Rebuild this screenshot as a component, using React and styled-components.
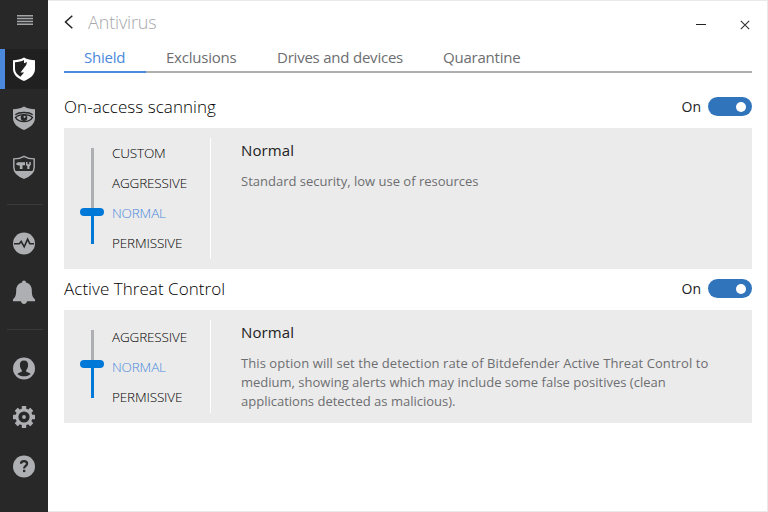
import React, { useState } from "react";
import styled, { createGlobalStyle } from "styled-components";

const MENU = [
  { id: "protection", Icon: ShieldIcon },
  { id: "privacy", Icon: EyeIcon },
  { id: "tools", Icon: ToolsIcon },
  { divider: true, id: "d1" },
  { id: "activity", Icon: ActivityIcon },
  { id: "notifications", Icon: BellIcon },
  { divider: true, id: "d2" },
  { id: "account", Icon: AccountIcon },
  { id: "settings", Icon: GearIcon },
  { id: "support", Icon: HelpIcon },
];

const TABS = [
  { name: "Shield", width: 82 },
  { name: "Exclusions", width: 111 },
  { name: "Drives and devices", width: 166 },
  { name: "Quarantine", width: 117 },
];

const SECTIONS = [
  {
    title: "On-access scanning",
    levels: ["CUSTOM", "AGGRESSIVE", "NORMAL", "PERMISSIVE"],
    level: "NORMAL",
    height: 141,
    offset: 0,
    rail: 28,
    text: [{ line: "Standard security, low use of resources" }],
  },
  {
    title: "Active Threat Control",
    levels: ["AGGRESSIVE", "NORMAL", "PERMISSIVE"],
    level: "NORMAL",
    height: 113,
    offset: 2,
    rail: 30,
    text: [
      {
        line: "This option will set the detection rate of Bitdefender Active Threat Control to",
        tracking: 0.075,
      },
      { line: "medium, showing alerts which may include some false positives (clean" },
      { line: "applications detected as malicious)." },
    ],
  },
];

function App() {
  const [tab, setTab] = useState("Shield");

  return (
    <Window>
      <GlobalStyle />
      <Sidebar>
        <MenuButton>
          <MenuIcon />
        </MenuButton>
        {MENU.map(({ id, Icon, divider }) =>
          divider ? (
            <Divider key={id} />
          ) : (
            <NavItem key={id} $active={id === "protection"}>
              <Icon />
            </NavItem>
          )
        )}
      </Sidebar>
      <Main>
        <Header>
          <BackIcon />
          <Title>Antivirus</Title>
          <WindowButtons>
            <MinimizeIcon />
            <CloseIcon />
          </WindowButtons>
        </Header>
        <Tabs>
          {TABS.map(({ name, width }) => (
            <Tab key={name} $width={width} $active={name === tab} onClick={() => setTab(name)}>
              {name}
            </Tab>
          ))}
        </Tabs>
        {SECTIONS.map((section) => (
          <Section key={section.title} {...section} />
        ))}
      </Main>
    </Window>
  );
}

function Section({ title, levels, level, height, offset, rail, text }) {
  const [on, setOn] = useState(true);

  return (
    <section>
      <SectionHead>
        <SectionTitle>{title}</SectionTitle>
        <SwitchLabel>{on ? "On" : "Off"}</SwitchLabel>
        <Switch $on={on} onClick={() => setOn(!on)}>
          <Knob />
        </Switch>
      </SectionHead>
      <Card $height={height}>
        <Slider>
          <Rail $height={levels.indexOf(level) * 30} />
          <Handle />
          <Rail $filled $height={rail} />
        </Slider>
        <Levels $offset={offset}>
          {levels.map((name) => (
            <Level key={name} $active={name === level}>
              {name}
            </Level>
          ))}
        </Levels>
        <Description>
          <h3>Normal</h3>
          {text.map(({ line, tracking }) => (
            <Line key={line} $tracking={tracking}>
              {line}
            </Line>
          ))}
        </Description>
      </Card>
    </section>
  );
}

function MenuIcon() {
  return (
    <svg width="16" height="10" viewBox="0 0 16 10" fill="#a4a5a8">
      <rect width="16" height="1.500" />
      <rect y="2.800" width="16" height="1.500" />
      <rect y="5.700" width="16" height="1.500" />
      <rect y="8.500" width="16" height="1.500" />
    </svg>
  );
}

function ShieldIcon() {
  return (
    <svg width="24" height="24" viewBox="0 0 24 24">
      <path d="M12 .5C9 2.500 5 3.200 1 3.200V12c0 5.500 4.500 9.500 11 12 6.500-2.500 11-6.500 11-12V3.200C19 3.200 15 2.500 12 .5z" fill="#fff" />
      <path d="M3 5.200c3.500 0 6.800-.8 9-2.200v3.300l3-1.200-.8 3-5.700 7.500h3.600l-3.700 4.100C5 17.500 3 15.200 3 12z" fill="#202020" />
    </svg>
  );
}

function EyeIcon() {
  return (
    <svg width="24" height="24" viewBox="0 0 24 24">
      <path d="M12 .5C9 2.500 5 3.200 1 3.200V12c0 5.500 4.500 9.500 11 12 6.500-2.500 11-6.500 11-12V3.200C19 3.200 15 2.500 12 .5z" fill="#aeafb3" />
      <path d="M3.300 8.800C7 5.700 17 5.700 20.700 8.800" fill="none" stroke="#282828" strokeWidth="1.300" />
      <path d="M3.500 11.500C7 7.600 17 7.600 20.500 11.500c-3 5.400-14 5.400-17 0z" fill="none" stroke="#282828" strokeWidth="1.400" />
      <circle cx="12" cy="11.800" r="3.300" fill="#282828" />
      <circle cx="12.600" cy="10.800" r="1.100" fill="#aeafb3" />
    </svg>
  );
}

function ToolsIcon() {
  return (
    <svg width="24" height="24" viewBox="0 0 24 24">
      <path d="M12 1.300C9 3.100 5.500 3.900 1.800 3.900V12c0 5 4.200 8.800 10.200 11.200C18 20.800 22.200 17 22.200 12V3.900C18.500 3.900 15 3.100 12 1.300z" fill="none" stroke="#aeafb3" strokeWidth="1.400" />
      <path d="M2.500 16h19c-1.500 3.200-4.500 5.700-9.500 7.500C7 21.700 4 19.200 2.500 16z" fill="#aeafb3" />
      <path d="M4.300 8.200L6 7.200h7v3h-2.500V14H7.800v-3.500H6.500L4.300 9.700zM14 7h1.500v2.200h1.800V7h1.500v3l-1.300 1.300V14h-2.200v-2.700L14 10z" fill="#aeafb3" />
    </svg>
  );
}

function ActivityIcon() {
  return (
    <svg width="24" height="24" viewBox="0 0 24 24">
      <circle cx="12" cy="12.500" r="11" fill="#aeafb3" />
      <path d="M2 12.700h5.300l1.900-2.200 3 5.300 3.400-7.600 2.200 4.500H22" fill="none" stroke="#282828" strokeWidth="1.600" />
    </svg>
  );
}

function BellIcon() {
  return (
    <svg width="24" height="24" viewBox="0 0 24 24" fill="#aeafb3">
      <path d="M12 .5c1.200 0 2 .9 2 2.100 3.700.9 5.800 3.900 5.800 7.400 0 5 .7 7.500 3.200 9.200v2H1v-2c2.500-1.700 3.200-4.200 3.200-9.200 0-3.500 2.100-6.500 5.800-7.400C10 1.400 10.800.5 12 .5zM9 21h6c0 1.800-1.200 2.900-3 2.900S9 22.800 9 21z" />
    </svg>
  );
}

function AccountIcon() {
  return (
    <svg width="24" height="24" viewBox="0 0 24 24">
      <circle cx="12" cy="12.500" r="11" fill="#aeafb3" />
      <path d="M12 4.500c2.900 0 4.200 1.900 4.100 4.400-.1 2.400-.8 4-1.900 5.100v1.700c1.800.9 3.600 1 4.400 2.300-1.600 1.500-3.900 2.300-6.600 2.300s-5-.8-6.600-2.300c.8-1.300 2.600-1.400 4.400-2.300V14c-1.100-1.100-1.800-2.700-1.900-5.100-.1-2.500 1.200-4.400 4.100-4.400z" fill="#282828" />
    </svg>
  );
}

function GearIcon() {
  return (
    <svg width="24" height="24" viewBox="0 0 24 24" fill="#aeafb3">
      {[0, 45, 90, 135].map((angle) => (
        <rect key={angle} x="9.800" y="1" width="4.400" height="22" rx=".5" transform={`rotate(${angle} 12 12)`} />
      ))}
      <circle cx="12" cy="12" r="8.500" />
      <circle cx="12" cy="12" r="5.600" fill="#282828" />
      <circle cx="12" cy="12" r="1.900" />
    </svg>
  );
}

function HelpIcon() {
  return (
    <svg width="24" height="24" viewBox="0 0 24 24">
      <circle cx="12" cy="12.500" r="11" fill="#aeafb3" />
      <path d="M9 9.800C9 8 10.200 7.200 12 7.200s3.100 1 3.100 2.600c0 2.200-3 2.200-3 4.700" fill="none" stroke="#282828" strokeWidth="2.200" />
      <rect x="11" y="15.800" width="2.300" height="2.300" fill="#282828" />
    </svg>
  );
}

function BackIcon() {
  return (
    <svg width="9" height="14" viewBox="0 0 9 14" fill="none" stroke="#222" strokeWidth="1.500">
      <path d="M8.300.7L1.500 7l6.800 6.300" />
    </svg>
  );
}

function MinimizeIcon() {
  return (
    <svg width="10" height="10" viewBox="0 0 10 10">
      <path d="M0 4.500h10" stroke="#222" />
    </svg>
  );
}

function CloseIcon() {
  return (
    <svg width="10" height="10" viewBox="0 0 10 10" stroke="#333" strokeWidth="1.100">
      <path d="M.8.800l8.400 8.400M9.200.8L.8 9.200" />
    </svg>
  );
}

const GlobalStyle = createGlobalStyle`
  * {
    box-sizing: border-box;
  }
  body {
    margin: 0;
  }
  h1, h2, h3, p {
    margin: 0;
    font-weight: 400;
  }
`;

const Window = styled.div`
  display: flex;
  width: 768px;
  height: 512px;
  background: #fff;
  font-family: "Open Sans", "Noto Sans", sans-serif;
  white-space: nowrap;
`;

const Sidebar = styled.nav`
  display: flex;
  flex-direction: column;
  flex-shrink: 0;
  width: 48px;
  background: #282828;
`;

const MenuButton = styled.div`
  display: flex;
  align-items: center;
  justify-content: center;
  height: 40px;
  margin-bottom: 9px;
  padding-left: 2px;
`;

const NavItem = styled.div`
  display: flex;
  align-items: center;
  justify-content: center;
  height: 40px;
  margin-bottom: 9px;
  padding-right: ${({ $active }) => ($active ? "5px" : "0")};
  border-left: ${({ $active }) => ($active ? "5px solid #4a89dc" : "none")};
  background: ${({ $active }) => ($active ? "#202020" : "transparent")};
`;

const Divider = styled.div`
  height: 1px;
  margin: 8px 5px 18px 7px;
  background: #3a3a3a;
`;

const Main = styled.main`
  flex: 1;
  min-width: 0;
  padding: 0 15px 0 16px;
  border: 1px solid #e9e9e9;
  border-left: none;
`;

const Header = styled.header`
  display: flex;
  align-items: center;
  height: 42px;
`;

const Title = styled.h1`
  margin-left: 15px;
  color: #a7a8ab;
  font-size: 18px;
  font-weight: 350;
  letter-spacing: -0.15px;
`;

const WindowButtons = styled.div`
  display: flex;
  gap: 34px;
  margin: 6px 2px 0 auto;
`;

const Tabs = styled.div`
  display: flex;
  height: 30px;
  box-shadow: inset 0 -2px #aeafb3;
`;

const Tab = styled.div`
  width: ${({ $width }) => $width}px;
  padding-left: 20px;
  border-bottom: 2px solid ${({ $active }) => ($active ? "#4a89dc" : "transparent")};
  color: ${({ $active }) => ($active ? "#4a89dc" : "#6d6e71")};
  font-size: 15px;
  letter-spacing: -0.22px;
  line-height: 28px;
`;

const SectionHead = styled.div`
  display: flex;
  align-items: center;
  height: 41px;
  padding-bottom: 2px;
  ${Tabs} + section & {
    height: 55px;
    padding-top: 14px;
  }
`;

const SectionTitle = styled.h2`
  flex: 1;
  color: #000;
  font-size: 17px;
  font-weight: 350;
  letter-spacing: 0.05px;
`;

const SwitchLabel = styled.span`
  margin-right: 7px;
  color: #222;
  font-size: 14px;
`;

const Switch = styled.div`
  display: flex;
  align-items: center;
  justify-content: ${({ $on }) => ($on ? "flex-end" : "flex-start")};
  width: 44px;
  height: 19px;
  padding: 0 6px;
  border-radius: 10px;
  background: ${({ $on }) => ($on ? "#3074bc" : "#aeafb3")};
`;

const Knob = styled.span`
  width: 10px;
  height: 10px;
  border-radius: 50%;
  background: #fff;
`;

const Card = styled.div`
  display: flex;
  height: ${({ $height }) => $height}px;
  padding: 10px 16px;
  background: #ebebeb;
`;

const Slider = styled.div`
  display: flex;
  flex-direction: column;
  align-items: center;
  width: 24px;
  padding-top: 10px;
`;

const Rail = styled.div`
  width: 3px;
  height: ${({ $height }) => $height}px;
  background: ${({ $filled }) => ($filled ? "#0078d7" : "#aeafb3")};
`;

const Handle = styled.div`
  width: 24px;
  height: 8px;
  border-radius: 4px;
  background: #0078d7;
`;

const Levels = styled.div`
  width: 107px;
  padding: ${({ $offset }) => $offset}px 0 0 8px;
  border-right: 1px solid #fff;
`;

const Level = styled.div`
  height: 30px;
  color: ${({ $active }) => ($active ? "#4a89dc" : "#000")};
  font-size: 13.5px;
  font-weight: 350;
  letter-spacing: -0.15px;
  line-height: 30px;
`;

const Description = styled.div`
  padding-left: 30px;
  color: #6d6e71;

  h3 {
    margin-bottom: 10px;
    color: #222;
    font-size: 15px;
    letter-spacing: 0.1px;
    line-height: 24px;
  }
`;

const Line = styled.p`
  font-size: 13px;
  letter-spacing: ${({ $tracking = 0 }) => $tracking}px;
  line-height: 19px;
`;

export default App;
